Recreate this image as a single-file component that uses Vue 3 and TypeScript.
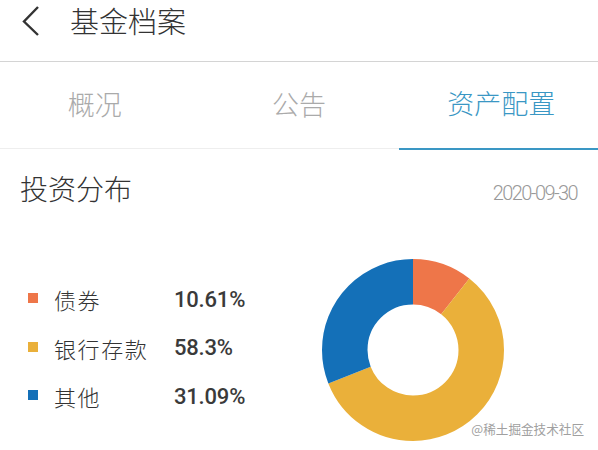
<template>
  <div class="page">
    <header class="topbar">
      <svg class="back" width="24" height="34" viewBox="0 0 24 34">
        <path d="M18 4 L4 18.5 L18 32" fill="none" stroke="#333" stroke-width="2.4" />
      </svg>
      <h1>基金档案</h1>
    </header>

    <nav class="tabs">
      <div v-for="tab in tabs" :key="tab" class="tab" :class="{ active: tab === activeTab }">{{ tab }}</div>
    </nav>

    <section class="section-head">
      <h2>投资分布</h2>
      <span class="date">2020-09-30</span>
    </section>

    <section class="chart-row">
      <div class="legend">
        <template v-for="item in items" :key="item.name">
          <i class="dot" :style="{ background: item.color }"></i>
          <span class="name">{{ item.name }}</span>
          <span class="value">{{ item.value }}%</span>
        </template>
      </div>
      <svg class="donut" width="182" height="182" viewBox="0 0 182 182">
        <circle
          v-for="seg in segments"
          :key="seg.name"
          cx="91"
          cy="91"
          :r="radius"
          fill="none"
          :stroke="seg.color"
          stroke-width="45.5"
          :stroke-dasharray="seg.dash"
          :stroke-dashoffset="seg.offset"
          transform="rotate(-90 91 91)"
        />
      </svg>
    </section>

    <div class="watermark">@稀土掘金技术社区</div>
  </div>
</template>

<script setup lang="ts">
import { computed } from 'vue';

const tabs = ['概况', '公告', '资产配置'];
const activeTab = '资产配置';

const items = [
  { name: '债券', value: 10.61, color: '#ee7649' },
  { name: '银行存款', value: 58.3, color: '#eab03a' },
  { name: '其他', value: 31.09, color: '#1470b8' }
];

const radius = 68.25;
const circumference = 2 * Math.PI * radius;

// each slice is a dash on the same circle, moved along by what came before it
const segments = computed(() => {
  let used = 0;
  return items.map(item => {
    const len = (item.value / 100) * circumference;
    const seg = {
      name: item.name,
      color: item.color,
      dash: `${len} ${circumference - len}`,
      offset: -used
    };
    used += len;
    return seg;
  });
});
</script>

<style>
html,
body {
  margin: 0;
  background: #fff;
}
</style>

<style scoped>
.page {
  position: relative;
  width: 598px;
  height: 450px;
  overflow: hidden;
  background: #fff;
  color: #333;
  font-family: "Noto Sans CJK SC", "Liberation Sans", sans-serif;
}

.topbar {
  display: flex;
  align-items: center;
  height: 61px;
  padding-left: 20px;
  border-bottom: 1px solid #d4d4d4;
}

.back {
  margin-top: -21px;
  flex: none;
}

.topbar h1 {
  margin: -21px 0 0 26px;
  font-size: 29px;
  font-weight: 300;
  line-height: 40px;
}

.tabs {
  display: grid;
  grid-template-columns: 1fr 1fr 1fr;
  height: 86px;
  border-bottom: 1px solid #eee;
}

.tab {
  display: flex;
  align-items: center;
  justify-content: center;
  padding-bottom: 6px;
  box-sizing: border-box;
  font-size: 27px;
  font-weight: 300;
  color: #aaa;
}

.tab:first-child {
  padding-right: 10px;
}

.tab.active {
  height: 88px;
  padding-left: 6px;
  border-bottom: 2px solid #3a97c4;
  color: #3a97c4;
}

.section-head {
  display: flex;
  justify-content: space-between;
  align-items: center;
  height: 78px;
  padding: 0 21px 0 20px;
}

.section-head h2 {
  margin: 0;
  font-size: 28px;
  font-weight: 300;
  line-height: 40px;
}

.date {
  margin-top: 10px;
  font-family: Roboto, sans-serif;
  font-size: 20px;
  font-weight: 300;
  letter-spacing: -1.6px;
  color: #999;
}

.chart-row {
  display: flex;
  align-items: center;
  justify-content: space-between;
  padding: 31.5px 94px 0 28px;
}

.legend {
  display: grid;
  grid-template-columns: 26px 120px auto;
  grid-auto-rows: 48.5px;
  align-items: center;
  margin-top: -4px;
}

.dot {
  width: 10px;
  height: 10px;
  margin-top: -2px;
}

.name {
  font-size: 22px;
  font-weight: 300;
  letter-spacing: 1.6px;
  white-space: nowrap;
}

.value {
  font-family: Roboto, sans-serif;
  font-size: 22px;
  font-weight: 500;
  letter-spacing: -0.2px;
  color: #3a3a3a;
}

.donut {
  flex: none;
}

/* site watermark, sits on top of the chart */
.watermark {
  position: absolute;
  right: 14px;
  bottom: 11px;
  font-size: 12.6px;
  line-height: 20px;
  color: #a0a0a0;
  text-shadow: 0 0 1px #fff;
}
</style>
